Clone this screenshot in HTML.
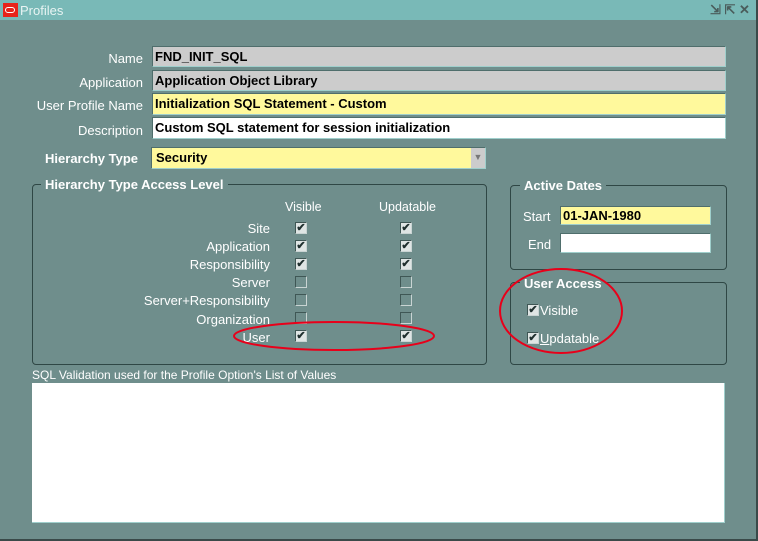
<!DOCTYPE html>
<html><head><style>
body{margin:0;width:758px;height:541px;background:#6f8e8c;position:relative;overflow:hidden;font-family:"Liberation Sans",sans-serif;font-size:12px;color:#fff}
.a{position:absolute}
.title{left:0;top:0;width:758px;height:20px;background:#79b9b7}
.f{position:absolute;border:1px solid #9fcfcc;border-top-color:#4f6e6c;border-left-color:#4f6e6c;font-weight:bold;color:#000;font-size:13px;line-height:19px;padding-left:2px;box-sizing:border-box}
.l{position:absolute;text-align:right;font-size:13px}
.box{position:absolute;border:1px solid #2f4745;border-radius:4px}
.lg{position:absolute;background:#6f8e8c;padding:0 4px;font-weight:bold;font-size:13px;color:#fff}
.cb{position:absolute;width:10px;height:10px;border:1px solid #c9d4d3;border-top-color:#3f5755;border-left-color:#3f5755;background:#6f8e8c;font-size:11px;line-height:10px;color:#1f2f2e;text-align:center;font-weight:bold}
.cb.c{background:#dfe5e4}
</style></head><body>
<div class="a title"></div>
<div class="a" style="left:3px;top:3px;width:15px;height:14px;background:#e8231a"><div class="a" style="left:2px;top:4px;width:8px;height:4px;border:1.5px solid #fff;border-radius:4px"></div></div>
<div class="a" style="left:20px;top:3px;font-size:13px;color:#e8f4f3">Profiles</div>
<div class="a" style="left:710px;top:2px;font-size:13px;color:#4a5c5b;font-weight:bold">⇲ ⇱ ✕</div>
<div class="a" style="left:756px;top:0;width:2px;height:541px;background:#3a4a49"></div>
<div class="a" style="left:0;top:539px;width:758px;height:2px;background:#3a4a49"></div>

<div class="l" style="left:0;width:143px;top:51px">Name</div>
<div class="l" style="left:0;width:143px;top:75px">Application</div>
<div class="l" style="left:0;width:143px;top:98px">User Profile Name</div>
<div class="l" style="left:0;width:143px;top:123px">Description</div>
<div class="l" style="left:0;width:138px;top:151px;font-weight:bold;font-size:13px">Hierarchy Type</div>
<div class="f" style="left:152px;top:46px;width:574px;height:21px;background:#cccccc">FND_INIT_SQL</div>
<div class="f" style="left:152px;top:70px;width:574px;height:21px;background:#cccccc">Application Object Library</div>
<div class="f" style="left:152px;top:93px;width:574px;height:22px;background:#fff99c">Initialization SQL Statement - Custom</div>
<div class="f" style="left:152px;top:117px;width:574px;height:22px;background:#fff">Custom SQL statement for session initialization</div>
<div class="f" style="left:151px;top:147px;width:335px;height:22px;background:#fff99c;padding-left:4px">Security<div class="a" style="right:0;top:0;width:14px;height:20px;background:#cccccc;color:#777;font-size:9px;text-align:center">▼</div></div>

<div class="box" style="left:32px;top:184px;width:453px;height:179px"></div>
<div class="lg" style="left:41px;top:177px">Hierarchy Type Access Level</div>
<div class="a" style="left:285px;top:200px;font-size:12.5px">Visible</div>
<div class="a" style="left:379px;top:200px;font-size:12.5px">Updatable</div>
<div class="l" style="left:100px;width:170px;top:221px">Site</div>
<div class="l" style="left:100px;width:170px;top:239px">Application</div>
<div class="l" style="left:100px;width:170px;top:257px">Responsibility</div>
<div class="l" style="left:100px;width:170px;top:275px">Server</div>
<div class="l" style="left:100px;width:170px;top:293px">Server+Responsibility</div>
<div class="l" style="left:100px;width:170px;top:312px">Organization</div>
<div class="l" style="left:100px;width:170px;top:330px">User</div>
<div class="cb c" style="left:295px;top:222px">✔</div><div class="cb c" style="left:400px;top:222px">✔</div>
<div class="cb c" style="left:295px;top:240px">✔</div><div class="cb c" style="left:400px;top:240px">✔</div>
<div class="cb c" style="left:295px;top:258px">✔</div><div class="cb c" style="left:400px;top:258px">✔</div>
<div class="cb" style="left:295px;top:276px"></div><div class="cb" style="left:400px;top:276px"></div>
<div class="cb" style="left:295px;top:294px"></div><div class="cb" style="left:400px;top:294px"></div>
<div class="cb" style="left:295px;top:312px"></div><div class="cb" style="left:400px;top:312px"></div>
<div class="cb c" style="left:295px;top:330px">✔</div><div class="cb c" style="left:400px;top:330px">✔</div>

<div class="box" style="left:510px;top:185px;width:215px;height:83px"></div>
<div class="lg" style="left:520px;top:178px">Active Dates</div>
<div class="a" style="left:523px;top:209px;font-size:13px">Start</div>
<div class="a" style="left:528px;top:237px;font-size:13px">End</div>
<div class="f" style="left:560px;top:206px;width:151px;height:19px;background:#fff99c;line-height:17px">01-JAN-1980</div>
<div class="f" style="left:560px;top:233px;width:151px;height:20px;background:#fff"></div>

<div class="box" style="left:510px;top:282px;width:215px;height:81px"></div>
<div class="lg" style="left:520px;top:276px">User Access</div>
<div class="cb c" style="left:527px;top:304px">✔</div><div class="a" style="left:540px;top:303px;font-size:13px">Visible</div>
<div class="cb c" style="left:527px;top:332px">✔</div><div class="a" style="left:540px;top:331px;font-size:13px"><u>U</u>pdatable</div>

<div class="a" style="left:32px;top:368px;font-size:12px">SQL Validation used for the Profile Option's List of Values</div>
<div class="a" style="left:32px;top:383px;width:692px;height:139px;background:#fff;border-bottom:1px solid #9fcfcc;border-right:1px solid #9fcfcc"></div>

<svg class="a" style="left:0;top:0" width="758" height="541"><ellipse cx="334" cy="336" rx="100" ry="14" fill="none" stroke="#e8001a" stroke-width="2"/><ellipse cx="561" cy="311" rx="61" ry="42" fill="none" stroke="#e8001a" stroke-width="2"/></svg>
</body></html>
